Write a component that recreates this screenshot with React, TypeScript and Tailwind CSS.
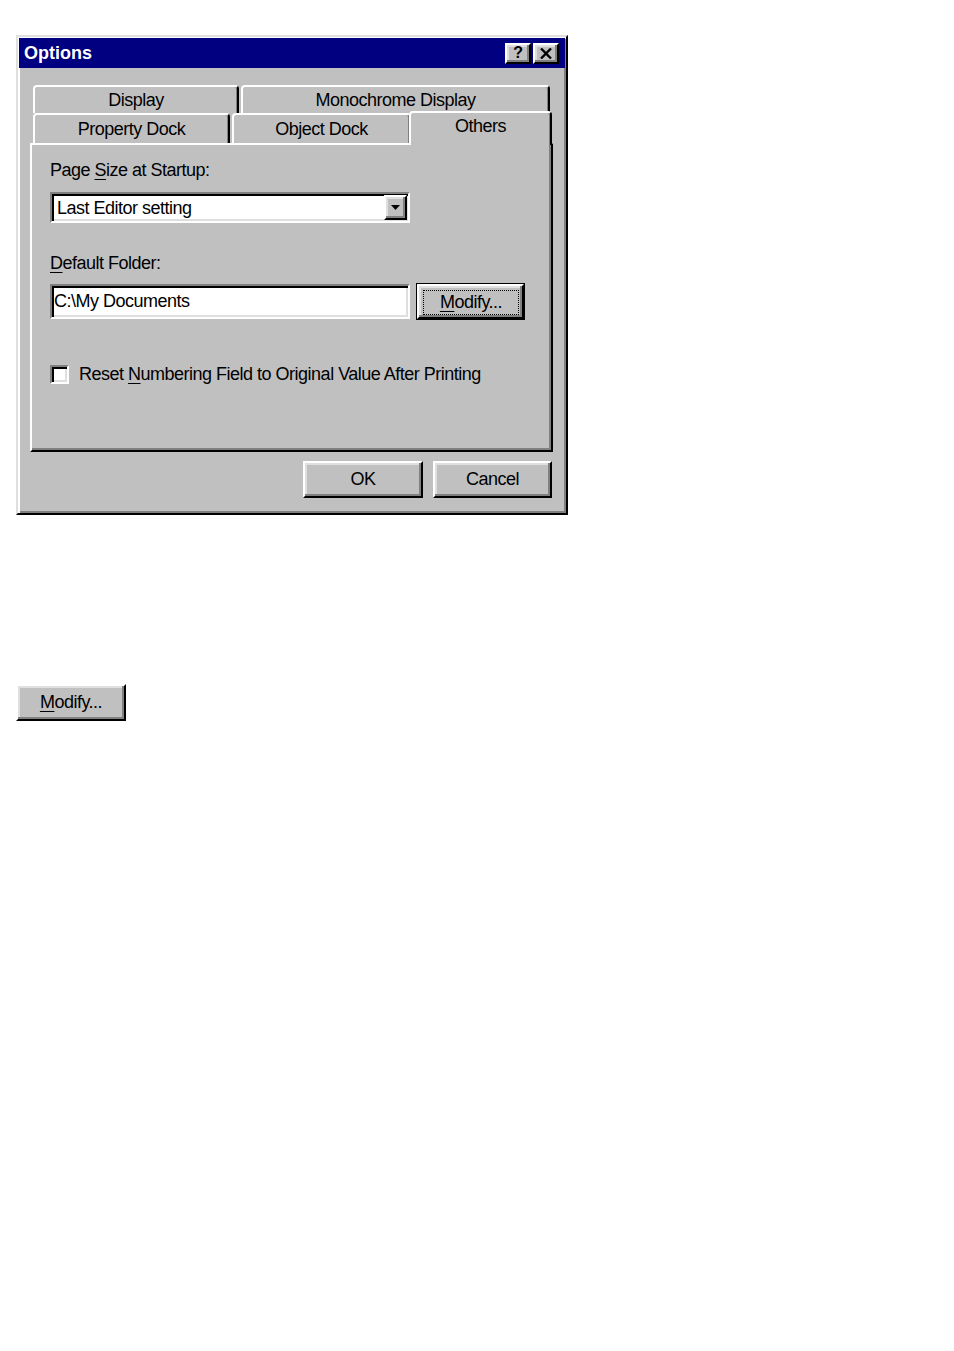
import React from "react";

const font = "font-['Liberation_Sans',Arial,sans-serif] text-[18px] tracking-[-0.5px] text-black";
const raised =
  "border-2 border-t-white border-l-white border-r-black border-b-black bg-[#c0c0c0] shadow-[inset_-2px_-2px_0_#808080,inset_2px_2px_0_#dfdfdf]";
const sunken =
  "border-2 border-t-[#808080] border-l-[#808080] border-r-white border-b-white bg-white shadow-[inset_2px_2px_0_#000,inset_-2px_-2px_0_#dfdfdf]";
const tab =
  "flex items-center justify-center bg-[#c0c0c0] border-t-2 border-l-2 border-r-2 border-t-white border-l-white border-r-black rounded-t-[4px] shadow-[inset_-1px_0_0_#808080]";

function ModifyLabel() {
  return (
    <span>
      <u className="underline-offset-[3px]">M</u>odify...
    </span>
  );
}

export default function App() {
  return (
    <div className={`${font} min-h-[1351px] bg-white pl-[16px] pt-[35px]`}>
      {/* dialog */}
      <div className="h-[480px] w-[552px] border-2 border-t-[#dfdfdf] border-l-[#dfdfdf] border-r-black border-b-black bg-[#c0c0c0] p-[1px] shadow-[inset_2px_2px_0_#fff,inset_-2px_-2px_0_#808080]">
        <div className="flex h-[30px] items-center justify-between bg-[#000080] pl-[5px] pr-[6px]">
          <span className="text-[18px] font-bold tracking-normal text-white">Options</span>
          <div className="flex gap-[2px]">
            <div className={`${raised} flex h-[21px] w-[26px] items-center justify-center text-[16px] font-bold leading-none`}>
              ?
            </div>
            <div className={`${raised} flex h-[21px] w-[26px] items-center justify-center`}>
              <svg width="12" height="11" viewBox="0 0 12 11">
                <path d="M1 0.5 L11 10.5 M11 0.5 L1 10.5" stroke="#000" strokeWidth="2.4" />
              </svg>
            </div>
          </div>
        </div>

        <div className="ml-[11px] mr-[12px] mt-[17px]">
          {/* tabs */}
          <div className="flex h-[28px] gap-[2px] pl-[3px]">
            <div className={`${tab} h-full w-[206px]`}>Display</div>
            <div className={`${tab} h-full w-[309px]`}>Monochrome Display</div>
          </div>
          <div className="flex h-[30px] items-end pl-[3px]">
            <div className={`${tab} mr-[2px] h-[30px] w-[197px]`}>Property Dock</div>
            <div className={`${tab} h-[30px] w-[179px]`}>Object Dock</div>
            <div className={`${tab} relative z-10 -mb-[2px] -ml-[2px] h-[34px] w-[143px] pb-[5px]`}>Others</div>
          </div>

          {/* panel */}
          <div className="h-[309px] w-[523px] border-2 border-t-white border-l-white border-r-black border-b-black pl-[18px] pt-[15px] shadow-[inset_-2px_-2px_0_#808080]">
            <div className="leading-[21px]">
              Page <u className="underline-offset-[3px]">S</u>ize at Startup:
            </div>
            <div className={`${sunken} mt-[11px] flex h-[31px] w-[360px] items-center justify-between pl-[5px]`}>
              <span className="leading-none">Last Editor setting</span>
              <div className={`${raised} mr-[1px] flex h-[25px] w-[23px] items-center justify-center`}>
                <svg width="9" height="5" viewBox="0 0 9 5">
                  <path d="M0 0 H9 L4.5 5 Z" fill="#000" />
                </svg>
              </div>
            </div>

            <div className="mt-[30px] leading-[21px]">
              <u className="underline-offset-[3px]">D</u>efault Folder:
            </div>
            <div className="mt-[9px] flex h-[37px] items-center gap-[6px]">
              <div className={`${sunken} flex h-[35px] w-[360px] items-center pl-[2px]`}>C:\My Documents</div>
              <div className="h-[37px] w-[109px] border border-black">
                <div className={`${raised} flex h-full w-full pb-[2px] pl-[4px] pr-[3px] pt-[4px]`}>
                  <span className="flex flex-1 items-center justify-center border border-dotted border-black">
                    <ModifyLabel />
                  </span>
                </div>
              </div>
            </div>

            <div className="mt-[44px] flex h-[21px] items-center gap-[10px]">
              <div className={`${sunken} h-[19px] w-[19px]`} />
              <span>
                Reset <u className="underline-offset-[3px]">N</u>umbering Field to Original Value After Printing
              </span>
            </div>
          </div>

          {/* buttons */}
          <div className="mt-[9px] flex justify-end gap-[10px] pr-[1px]">
            <div className={`${raised} flex h-[37px] w-[120px] items-center justify-center`}>OK</div>
            <div className={`${raised} flex h-[37px] w-[119px] items-center justify-center`}>Cancel</div>
          </div>
        </div>
      </div>

      <div className={`${raised} mt-[169px] flex h-[37px] w-[110px] items-center justify-center`}>
        <ModifyLabel />
      </div>
    </div>
  );
}
